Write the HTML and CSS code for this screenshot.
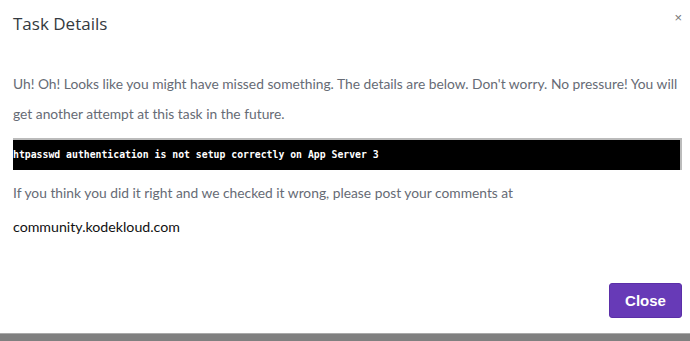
FILE: index.html
```html
<!DOCTYPE html>
<html lang="en">
<head>
    <meta charset="UTF-8">
    <meta name="viewport" content="width=device-width, initial-scale=1.0">
    <title>Task Details</title>
    <link rel="stylesheet" href="styles.css">
</head>

<body>
    <div class="modal">
        <div class="modal-header">
            <h4 class="modal-title">Task Details</h4>
            <button class="close-x" aria-label="Close">&times;</button>
        </div>

        <div class="modal-body">
            <p class="message">Uh! Oh! Looks like you might have missed something. The details are below. Don't worry. No pressure! You will get another attempt at this task in the future.</p>
            <pre class="details">htpasswd authentication is not setup correctly on App Server 3</pre>
            <p class="message">If you think you did it right and we checked it wrong, please post your comments at</p>
            <p class="link">community.kodekloud.com</p>
        </div>

        <div class="modal-footer">
            <button class="btn-close">Close</button>
        </div>
    </div>
    <div class="backdrop-edge"></div>
</body>
</html>
```

FILE: styles.css
```css
body {
    margin: 0;
    background-color: #fff;
    font-family: 'Lato', 'Open Sans', sans-serif;
    height: 341px;
    display: flex;
    flex-direction: column;
}
.modal {
    flex: 1;
    display: flex;
    flex-direction: column;
    padding: 0 8px 0 13px;
}
.modal-header {
    display: flex;
    justify-content: space-between;
    align-items: flex-start;
    height: 69px;
}
.modal-title {
    margin: 12px 0 0;
    font-family: 'Open Sans', sans-serif;
    font-size: 17px;
    font-weight: 400;
    color: #343a40;
}
.close-x {
    background: none;
    border: none;
    padding: 0;
    margin-top: 11px;
    font-size: 13px;
    line-height: 1;
    color: #777;
    cursor: pointer;
}
.message {
    margin: 0;
    font-size: 13.8px;
    line-height: 30px;
    color: #666b75;
}
.details {
    margin: 9px 0 8px;
    background-color: #000;
    color: #fff;
    font-family: 'DejaVu Sans Mono', monospace;
    font-size: 9.8px;
    font-weight: bold;
    line-height: 30px;
    border-top: 2px solid #bbb;
    border-right: 2px solid #bbb;
    white-space: pre;
}
.link {
    margin: 4px 0 0;
    font-size: 14.2px;
    line-height: 30px;
    color: #111;
}
.modal-footer {
    margin-top: auto;
    display: flex;
    justify-content: flex-end;
    padding-bottom: 15px;
}
.btn-close {
    background-color: #673ab7;
    color: #fff;
    border: 1px solid #5b2fa8;
    border-radius: 3px;
    width: 73px;
    height: 35px;
    font-family: 'Liberation Sans', Arial, sans-serif;
    font-size: 15px;
    font-weight: bold;
    cursor: pointer;
}
.backdrop-edge {
    height: 7px;
    background-color: #808080;
    border-top: 1px solid #aaa;
}
```
